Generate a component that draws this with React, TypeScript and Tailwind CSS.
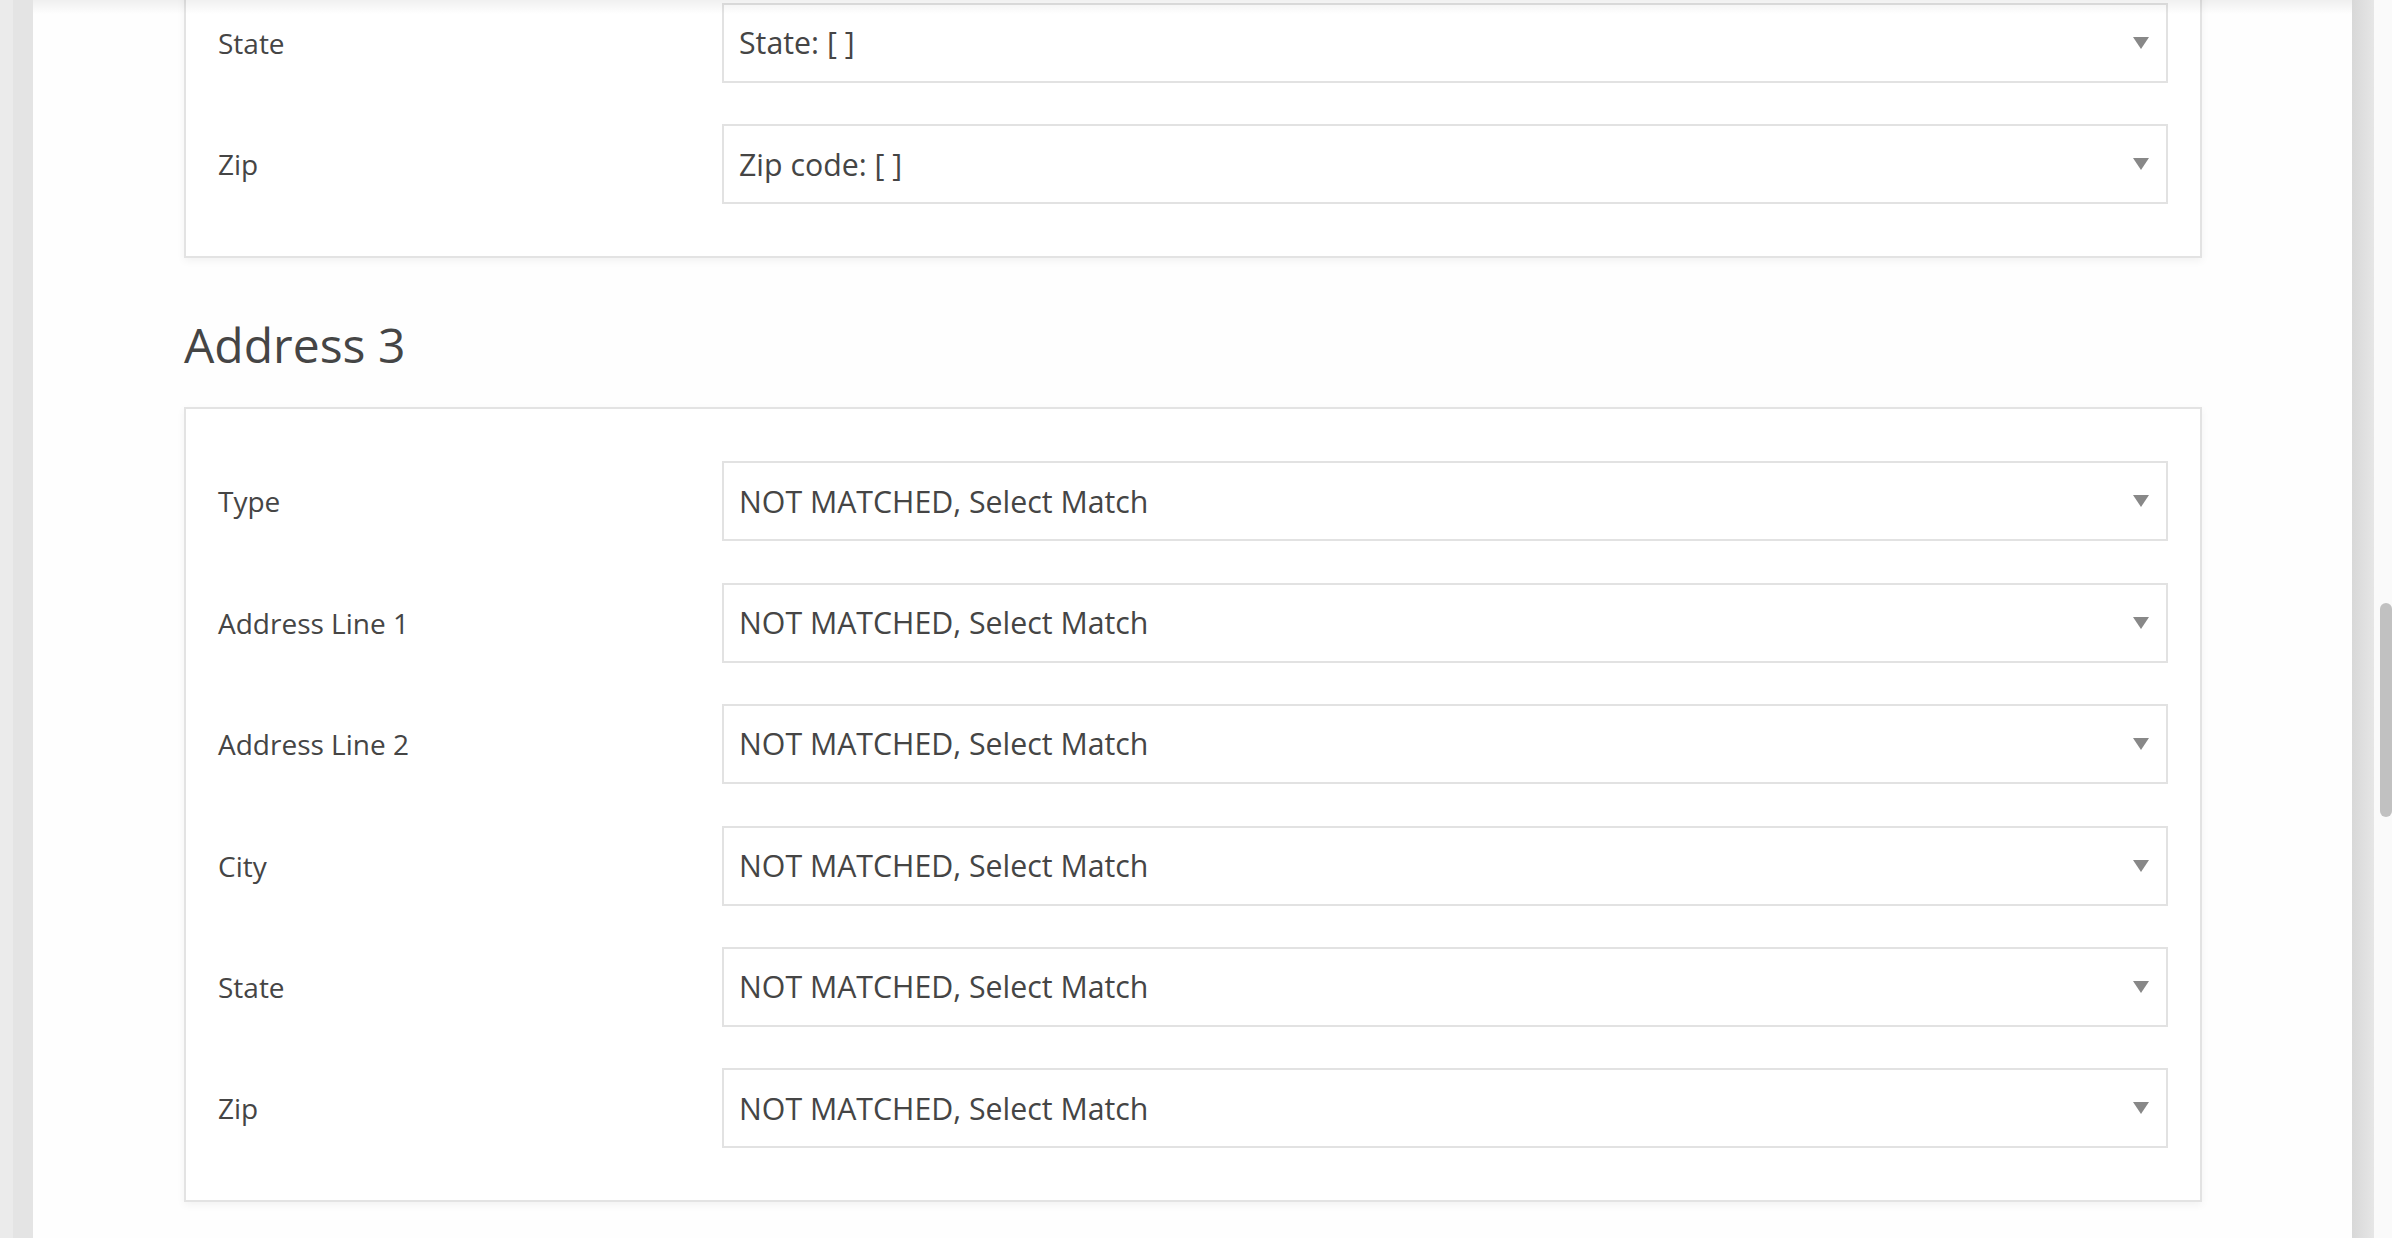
import React from "react";

const font = { fontFamily: '"Open Sans", "Noto Sans", sans-serif' };

function Arrow() {
  return (
    <svg width="16" height="12" viewBox="0 0 16 12" className="shrink-0">
      <polygon points="0,0 16,0 8,12" fill="#888888" />
    </svg>
  );
}

function Row({ label, value }: { label: string; value: string }) {
  return (
    <div className="flex items-center">
      <div className="w-[504px] shrink-0 text-[28px] text-[#454545]">{label}</div>
      <div className="flex h-[80px] flex-1 items-center justify-between border-2 border-[#e2e2e2] bg-white pl-[15px] pr-[17px]">
        <span className="text-[30.3px] text-[#454545]">{value}</span>
        <Arrow />
      </div>
    </div>
  );
}

function Card({ rows }: { rows: [string, string][] }) {
  return (
    <div className="flex flex-col gap-[41.4px] border-2 border-[#e3e3e3] bg-white px-[32px] py-[52px] shadow-[0_3px_8px_rgba(0,0,0,0.05)]">
      {rows.map(([l, v]) => (
        <Row key={l} label={l} value={v} />
      ))}
    </div>
  );
}

export default function App() {
  const nm = "NOT MATCHED, Select Match";
  return (
    <div className="relative flex h-[1238px] w-full overflow-hidden bg-white" style={font}>
      <div className="flex w-[33px] shrink-0">
        <div className="w-[13px] bg-[#ebebeb]" />
        <div className="w-[20px] bg-[#e4e4e4]" />
      </div>
      <div className="relative flex-1 bg-[#fefefe] pl-[151px] pr-[150px]">
        <div className="mt-[-51px]">
          <Card
            rows={[
              ["State", "State: [ ]"],
              ["Zip", "Zip code: [ ]"],
            ]}
          />
        </div>
        <h2 className="mt-[60px] mb-[36px] text-[48px] font-normal leading-[53px] text-[#454545]">
          Address 3
        </h2>
        <Card
          rows={[
            ["Type", nm],
            ["Address Line 1", nm],
            ["Address Line 2", nm],
            ["City", nm],
            ["State", nm],
            ["Zip", nm],
          ]}
        />
        <div className="pointer-events-none absolute left-0 right-0 top-0 h-[14px] bg-gradient-to-b from-[rgba(0,0,0,0.06)] to-transparent" />
      </div>
      <div className="w-[22px] shrink-0 bg-gradient-to-r from-[#d8d8d8] to-[#e6e6e6]" />
      <div className="w-[18px] shrink-0 bg-[#fafafa] pt-[603px]">
        <div className="ml-[6px] h-[214px] w-[12px] rounded-[6px] bg-[#c1c1c1]" />
      </div>
    </div>
  );
}
